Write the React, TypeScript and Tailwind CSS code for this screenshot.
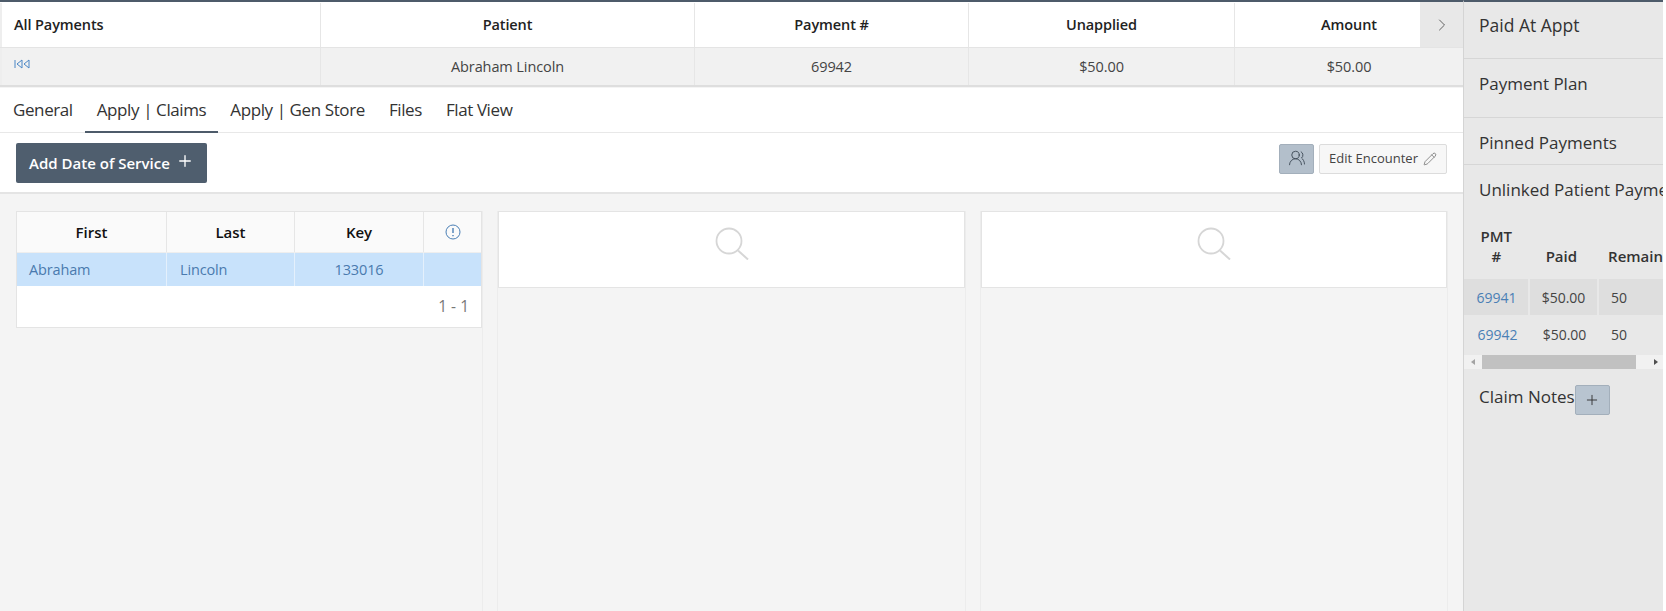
import React from "react";
import { ChevronRight, Plus, Pencil, UsersRound } from "lucide-react";

const tabs = ["General", "Apply | Claims", "Apply | Gen Store", "Files", "Flat View"];

const EmptyColumn: React.FC<{ width: string }> = ({ width }) => (
  <div className={`${width} shrink-0 border-x border-[#ececec]`}>
    <div className="h-[77px] bg-white border border-[#e4e4e4] flex justify-center pt-[15px]">
      <svg width="34" height="33" viewBox="0 0 34 33" fill="none" stroke="#d6d6d6" strokeWidth="1.8">
        <circle cx="14" cy="14" r="12.5" />
        <path d="M23 23.5 33 32.5" strokeWidth="2" />
      </svg>
    </div>
  </div>
);

const App: React.FC = () => {
  return (
    <div className="font-['Open_Sans',sans-serif] w-[1666px] h-[611px] overflow-hidden flex bg-white text-[#333]">
      <div className="w-[1463px] shrink-0 flex flex-col bg-[#f4f4f4]">
        {/* payments table */}
        <div className="relative border-t-2 border-[#4d5b6a]">
          <div className="flex h-[45px] text-[14.5px] tracking-[-0.1px] font-semibold text-[#222] items-center pt-[1px] bg-white">
            <div className="w-[321px] h-full pl-[12px] flex items-center border-l-2 border-[#eee] border-r border-r-[#e6e6e6]">All Payments</div>
            <div className="w-[374px] h-full flex items-center justify-center border-r border-[#e6e6e6]">Patient</div>
            <div className="w-[274px] h-full flex items-center justify-center border-r border-[#e6e6e6]">Payment #</div>
            <div className="w-[266px] h-full flex items-center justify-center border-r border-[#e6e6e6]">Unapplied</div>
            <div className="w-[228px] h-full flex items-center justify-center">Amount</div>
          </div>
          {/* chevron tab sits over the end of the header */}
          <div className="absolute right-0 top-0 w-[43px] h-[45px] bg-[#e8e8e8] flex justify-center pt-[13px]">
            <ChevronRight className="w-[20px] h-[20px] text-[#555]" strokeWidth={1.1} />
          </div>
          <div className="flex h-[40px] bg-[#f1f1f1] text-[14.5px] tracking-[-0.1px] text-[#444] border-y border-[#e4e4e4] border-b-2 border-b-[#dedede]">
            <div className="w-[321px] pl-[12px] pt-[11px] border-l-2 border-[#eee] border-r border-r-[#e6e6e6]">
              <svg width="16" height="10" viewBox="0 0 16 10" fill="none" stroke="#4a86c5" strokeWidth="1" className="block">
                <path d="M1 1v8M8 1 3 5l5 4zM15 1l-5 4 5 4z" />
              </svg>
            </div>
            <div className="w-[374px] flex items-center justify-center border-r border-[#e6e6e6]">Abraham Lincoln</div>
            <div className="w-[274px] flex items-center justify-center border-r border-[#e6e6e6]">69942</div>
            <div className="w-[266px] flex items-center justify-center border-r border-[#e6e6e6]">$50.00</div>
            <div className="w-[228px] flex items-center justify-center">$50.00</div>
          </div>
        </div>

        {/* tabs */}
        <div className="h-[45px] mt-px bg-white border-b border-[#e8e8e8] flex pl-[1px] text-[17px] tracking-[-0.4px] text-[#333]">
          {tabs.map((t) => (
            <div
              key={t}
              className={`px-[12px] flex items-center ${t === "Apply | Claims" ? "border-b-2 border-[#4d5b6a] mb-[-1px]" : ""}`}
            >
              {t}
            </div>
          ))}
        </div>

        {/* toolbar */}
        <div className="h-[61px] bg-white border-b-2 border-[#e4e4e4] flex items-start justify-between px-[16px] pt-[10px]">
          <button className="h-[40px] w-[191px] bg-[#4f5e6e] rounded-[2px] text-white text-[15px] font-semibold flex items-center justify-center gap-[6px]">
            Add Date of Service
            <Plus className="w-[18px] h-[18px] -mt-[4px]" strokeWidth={1.8} />
          </button>
          <div className="flex gap-[5px] mt-[1px]">
            <button className="w-[35px] h-[30px] bg-[#b3bfcb] border border-[#a3afbb] rounded-[2px] flex items-center justify-center">
              <UsersRound className="w-[18px] h-[18px] text-[#3b4754] -mt-[2px]" strokeWidth={1.2} />
            </button>
            <button className="w-[128px] h-[30px] bg-[#f7f7f7] border border-[#dcdcdc] rounded-[2px] text-[13px] text-[#444] flex items-center justify-center gap-[5px]">
              Edit Encounter
              <Pencil className="w-[14px] h-[14px] text-[#555]" strokeWidth={1.1} />
            </button>
          </div>
        </div>

        {/* content columns */}
        <div className="flex-1 flex pl-[16px] pt-[17px]">
          <div className="w-[467px] shrink-0 border-r border-[#ececec] h-full">
            <div className="h-[117px] bg-white border border-[#e4e4e4]">
              <div className="flex h-[41px] bg-[#fafafa] text-[15px] font-semibold text-[#111] border-b border-[#eee]">
                <div className="w-[150px] flex items-center justify-center border-r border-[#e6e6e6]">First</div>
                <div className="w-[128px] flex items-center justify-center border-r border-[#e6e6e6]">Last</div>
                <div className="w-[129px] flex items-center justify-center border-r border-[#e6e6e6]">Key</div>
                <div className="flex-1 flex items-center justify-center">
                  <svg width="16" height="16" viewBox="0 0 16 16" fill="none" stroke="#4a7fb5" strokeWidth="1">
                    <circle cx="8" cy="8" r="7" />
                    <path d="M8 4v5M8 11v1.2" strokeWidth="1.4" />
                  </svg>
                </div>
              </div>
              <div className="flex h-[33px] bg-[#c8e2fb] text-[14.5px] tracking-[-0.15px] text-[#4a7aae]">
                <div className="w-[150px] pl-[12px] flex items-center border-r border-[#e4f0fc]">Abraham</div>
                <div className="w-[128px] pl-[13px] flex items-center border-r border-[#e4f0fc]">Lincoln</div>
                <div className="w-[129px] flex items-center justify-center border-r border-[#e4f0fc]">133016</div>
                <div className="flex-1" />
              </div>
              <div className="h-[41px] flex items-center justify-end pr-[12px] text-[15.5px] text-[#777]">1 - 1</div>
            </div>
          </div>
          <div className="w-[14px] shrink-0" />
          <EmptyColumn width="w-[469px]" />
          <div className="w-[14px] shrink-0" />
          <EmptyColumn width="w-[468px]" />
        </div>
      </div>

      {/* right sidebar */}
      <div className="w-[200px] shrink-0 bg-[#e8e8e8] border-l border-[#d4d4d4] border-t-2 border-t-[#4d5b6a] overflow-hidden text-[17px] text-[#333]">
        <div className="h-[57px] pl-[15px] pt-[10px] text-[17.5px] border-b border-[#d6d6d6]">Paid At Appt</div>
        <div className="h-[59px] pl-[15px] pt-[12px] border-b border-[#d6d6d6]">Payment Plan</div>
        <div className="h-[47px] pl-[15px] pt-[12px] border-b border-[#d6d6d6]">Pinned Payments</div>
        <div className="h-[38px] pl-[15px] pt-[13px] whitespace-nowrap leading-[24px]">Unlinked Patient Payments</div>
        <div className="flex h-[76px] text-[15px] font-semibold text-[#333] items-end pb-[13px] pl-[1px] leading-[20px]">
          <div className="w-[66px] text-center">PMT<br />#</div>
          <div className="w-[71px] text-center">Paid</div>
          <div className="pl-[13px]">Remain</div>
        </div>
        <div className="flex h-[36px] bg-[#dedede] text-[14px] items-center pl-[1px]">
          <div className="w-[65px] h-full flex items-center justify-center text-[#4a7fb5] border-r-2 border-[#e8e8e8] pt-[1px]">69941</div>
          <div className="w-[69px] h-full flex items-center justify-center text-[#444] border-r-2 border-[#e8e8e8] pt-[1px]">$50.00</div>
          <div className="pl-[12px] text-[#444] pt-[1px]">50</div>
        </div>
        <div className="flex h-[38px] text-[14px] items-center pl-[1px] pt-[1px]">
          <div className="w-[65px] flex items-center justify-center text-[#4a7fb5]">69942</div>
          <div className="w-[69px] flex items-center justify-center text-[#444]">$50.00</div>
          <div className="pl-[12px] text-[#444]">50</div>
        </div>
        <div className="h-[14px] mt-[2px] bg-[#f1f1f1] flex items-center">
          <svg width="18" height="14" viewBox="0 0 18 14" className="shrink-0">
            <path d="M11 4v6L7 7z" fill="#a3a3a3" />
          </svg>
          <div className="w-[154px] h-[14px] bg-[#c1c1c1]" />
          <svg width="27" height="14" viewBox="0 0 27 14" className="shrink-0">
            <path d="M18 4v6l4-3z" fill="#505050" />
          </svg>
        </div>
        <div className="flex pl-[15px] pt-[16px] items-start">
          <span className="-mt-[1px] whitespace-nowrap">Claim Notes</span>
          <button className="w-[35px] h-[30px] bg-[#b8c4d0] border border-[#a3afbb] rounded-[2px] flex items-center justify-center">
            <Plus className="w-[16px] h-[16px] text-[#333]" strokeWidth={1.4} />
          </button>
        </div>
      </div>
      <div className="flex-1 bg-white" />
    </div>
  );
};

export default App;
